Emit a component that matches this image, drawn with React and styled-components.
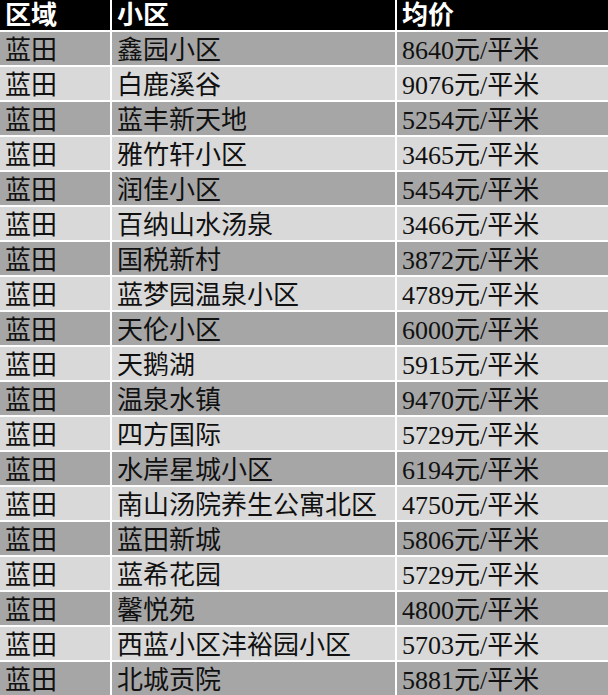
import React from 'react';
import styled, { createGlobalStyle } from 'styled-components';

const GlobalStyle = createGlobalStyle`
  html, body {
    margin: 0;
    padding: 0;
    background: #ffffff;
  }
`

const Table = styled.div`
  display: grid;
  grid-template-columns: 110px 283px 1fr;
  grid-auto-rows: 33px;
  grid-template-rows: 30px;
  gap: 2px;
  width: 608px;
  background: #ffffff;
  font-family: "Liberation Serif", "Noto Sans CJK SC", serif;
`

const Cell = styled.div`
  display: flex;
  align-items: center;
  padding: 4px 0 0 5px;
  box-sizing: border-box;
  font-size: 26px;
  line-height: 1;
  white-space: nowrap;
  overflow: hidden;
  color: #111111;
  background: ${(p) => (p.$dark ? '#a6a6a6' : '#d9d9d9')};
`

const HeadCell = styled(Cell)`
  background: #000000;
  color: #ffffff;
  font-weight: bold;
  padding-top: 1px;
`

const rows = [
	['鑫园小区', '8640'],
	['白鹿溪谷', '9076'],
	['蓝丰新天地', '5254'],
	['雅竹轩小区', '3465'],
	['润佳小区', '5454'],
	['百纳山水汤泉', '3466'],
	['国税新村', '3872'],
	['蓝梦园温泉小区', '4789'],
	['天伦小区', '6000'],
	['天鹅湖', '5915'],
	['温泉水镇', '9470'],
	['四方国际', '5729'],
	['水岸星城小区', '6194'],
	['南山汤院养生公寓北区', '4750'],
	['蓝田新城', '5806'],
	['蓝希花园', '5729'],
	['馨悦苑', '4800'],
	['西蓝小区沣裕园小区', '5703'],
	['北城贡院', '5881'],
];

const App = () => {
	return (
		<>
			<GlobalStyle />
			<Table>
				<HeadCell>区域</HeadCell>
				<HeadCell>小区</HeadCell>
				<HeadCell>均价</HeadCell>
				{rows.map((r, i) => (
					<React.Fragment key={i}>
						<Cell $dark={i % 2 === 0}>蓝田</Cell>
						<Cell $dark={i % 2 === 0}>{r[0]}</Cell>
						<Cell $dark={i % 2 === 0}>{r[1]}元/平米</Cell>
					</React.Fragment>
				))}
			</Table>
		</>
	);
};

export default App;
